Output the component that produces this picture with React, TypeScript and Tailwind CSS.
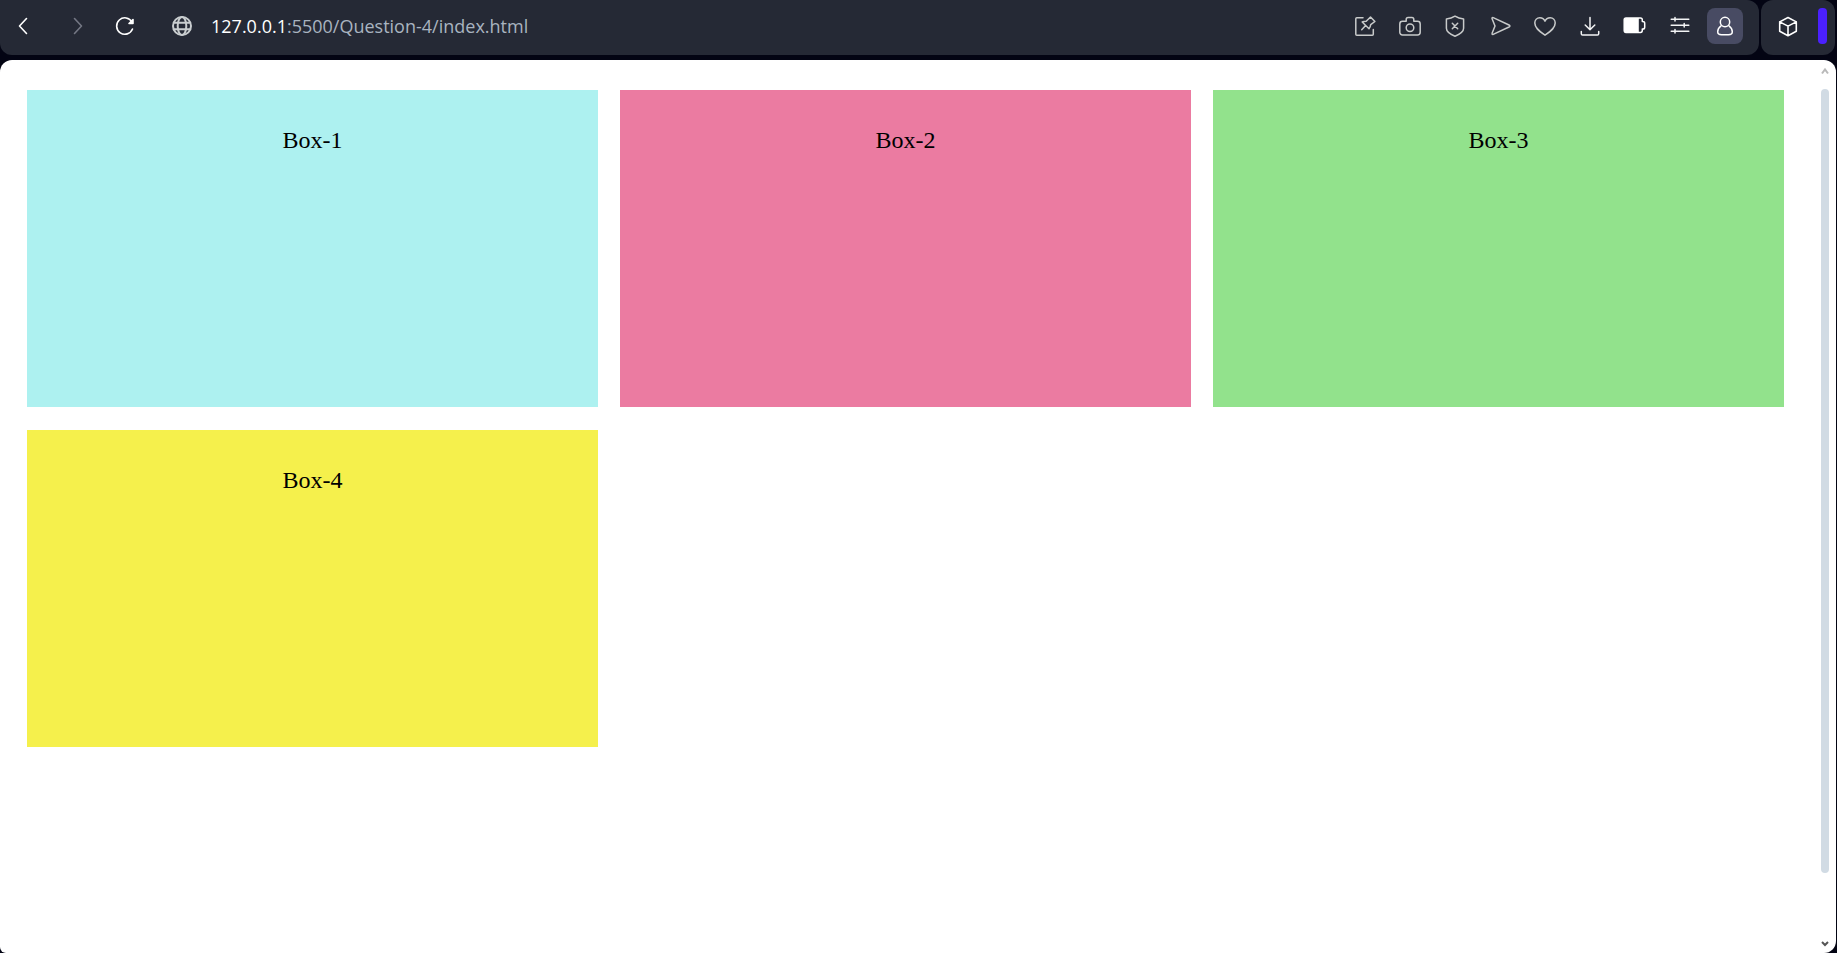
import type { ReactNode } from "react";

type IconProps = { children: ReactNode; size?: string; stroke?: string };

function Icon({ children, size = "size-6", stroke = "1.5" }: IconProps) {
  return (
    <svg
      viewBox="0 0 24 24"
      className={size}
      fill="none"
      stroke="currentColor"
      strokeWidth={stroke}
      strokeLinecap="round"
      strokeLinejoin="round"
      aria-hidden="true"
    >
      {children}
    </svg>
  );
}

type ToolProps = { label: string; className?: string; children: ReactNode };

function Tool({ label, className = "text-[#c8caca]", children }: ToolProps) {
  return (
    <button
      type="button"
      aria-label={label}
      className={`flex size-9 shrink-0 items-center justify-center rounded-lg ${className}`}
    >
      {children}
    </button>
  );
}

function Toolbar() {
  return (
    <header className="flex gap-0.5 pr-0.5">
      <div className="flex h-[55px] min-w-0 flex-1 items-start rounded-b-xl rounded-tr-xl bg-[#252935] pt-2 pr-4 pl-[5px]">
        <nav aria-label="History" className="flex items-center">
          <Tool label="Back" className="text-white">
            <Icon stroke="1.6">
              <path d="M15.500 4.500 8.500 12l7 7.500" />
            </Icon>
          </Tool>
          <Tool label="Forward" className="ml-[19px] text-[#747784]">
            <Icon stroke="1.6">
              <path d="M8.500 4.500 15.500 12l-7 7.500" />
            </Icon>
          </Tool>
          <Tool label="Reload" className="ml-[11px] text-white">
            <Icon stroke="1.6">
              <path d="M19 8A8.200 8.200 0 1 0 19.500 15" />
              <path d="M20 5.500v4h-4z" fill="currentColor" />
            </Icon>
          </Tool>
        </nav>
        <Tool label="Site information" className="ml-[21px] text-[#c9cdcf]">
          <Icon stroke="2">
            <circle cx="12" cy="12" r="9" />
            <ellipse cx="12" cy="12" rx="4.300" ry="9" />
            <path d="M3.800 8.800h16.400M3.800 15.200h16.400" />
          </Icon>
        </Tool>
        <div
          role="textbox"
          aria-label="Address"
          className="ml-[11px] min-w-0 flex-1 truncate font-['Open_Sans','Noto_Sans',sans-serif] text-lg leading-9 text-[#a9b4c0]"
        >
          <span className="font-medium text-white">127.0.0.1</span>:5500/Question-4/index.html
        </div>
        <div className="flex gap-[9px]">
          <Tool label="Pinboard">
            <Icon>
              <path d="M10 3.700H3.800c-.6 0-1 .4-1 1v15.500c0 .6.400 1 1 1h15.500c.6 0 1-.4 1-1V15.500" />
              <path d="m17.500 3 4.400 4.500-4.200 3.200c-.2 1.500-.7 2.900-1.700 4L9.200 8c1.200-.6 2.600-.8 4-.8zM12.400 11.800l-3.700 3.900" />
            </Icon>
          </Tool>
          <Tool label="Snapshot">
            <Icon>
              <path d="M8.200 7.200V5.500c0-1.100.8-1.900 1.900-1.900h3.800c1.100 0 1.900.8 1.900 1.900v1.700h3.700c1.600 0 2.700 1.100 2.700 2.700v8.300c0 1.600-1.100 2.700-2.700 2.700h-15c-1.600 0-2.700-1.100-2.700-2.700V9.900c0-1.600 1.100-2.700 2.700-2.700z" />
              <circle cx="12" cy="13.700" r="3.800" />
            </Icon>
          </Tool>
          <Tool label="Ad blocker">
            <Icon>
              <path d="M12 2.200c2.600 1.700 5.300 2.500 8.600 2.700v9.300c0 3.900-3.700 6-8.600 8-4.900-2-8.600-4.100-8.600-8V4.900C6.700 4.700 9.400 3.900 12 2.200z" />
              <path d="m9.300 9.300 5.400 5.400M14.700 9.300l-5.400 5.400" />
            </Icon>
          </Tool>
          <Tool label="My Flow">
            <Icon>
              <path d="M5.200 3.600 21 11c1.200.6 1.200 1.400 0 2L5.200 20.400c-.9.400-1.500-.2-1.100-1.100L7 12 4.100 4.700c-.4-.9.200-1.500 1.100-1.100z" />
            </Icon>
          </Tool>
          <Tool label="Bookmark">
            <Icon>
              <path d="M12 21.200C5.500 16.800 1.800 13.600 1.800 9c0-3 2.200-5.300 5-5.300 2.200 0 4.300 1.200 5.200 3.400.9-2.200 3-3.400 5.200-3.400 2.800 0 5 2.300 5 5.300 0 4.600-3.700 7.800-10.200 12.200z" />
            </Icon>
          </Tool>
          <Tool label="Downloads" className="text-[#f3f4f5]">
            <Icon>
              <path d="M12 3.500v12.200M7.200 11l4.800 4.800 4.800-4.800M3.300 17.500v2.200c0 .8.500 1.300 1.300 1.300h14.800c.8 0 1.300-.5 1.300-1.300v-2.200" />
            </Icon>
          </Tool>
          <Tool label="Battery saver" className="text-white">
            <Icon>
              <path
                d="M3.200 4h12.600v14.400H3.200c-1.200 0-2-.8-2-2V6c0-1.200.8-2 2-2z"
                fill="currentColor"
                stroke="none"
              />
              <path d="M3 4h14.500c1 0 1.800.8 1.800 1.800v1.700h.6c1.100 0 1.800.7 1.800 1.800v3.900c0 1.100-.7 1.800-1.800 1.800h-.6v1.600c0 1-.8 1.800-1.800 1.800H3c-1 0-1.800-.8-1.800-1.800V5.800C1.200 4.800 2 4 3 4z" />
            </Icon>
          </Tool>
          <Tool label="Easy setup" className="text-[#f3f4f5]">
            <Icon>
              <path d="M3.200 5.200h17.600M3.200 11.200h17.600M3.200 17.200h17.600M7 3.500v3.400M16.200 9.500v3.400M7 15.500v3.400" />
            </Icon>
          </Tool>
          <Tool label="Profile" className="bg-[#484b63] text-white">
            <Icon>
              <circle cx="12" cy="8" r="4.700" />
              <path d="M8 11.800c-2.200 1.600-3.300 3.800-3.300 5.900 0 2.400 1.500 3 3.800 3h7c2.300 0 3.800-.6 3.800-3 0-2.100-1.100-4.300-3.300-5.900" />
            </Icon>
          </Tool>
        </div>
      </div>
      <div className="flex h-[55px] items-start gap-3 rounded-xl bg-[#252935] pt-2 pr-2 pl-[9px]">
        <Tool label="Extensions" className="text-white">
          <Icon stroke="1.600">
            <path d="m12 3.500 8.300 4.400v9.400L12 21.700l-8.300-4.400V7.900zM3.700 7.900l8.300 4.200 8.300-4.200M12 12.100v9.600" />
          </Icon>
        </Tool>
        <button type="button" aria-label="Open side panel" className="h-9 w-[9px] rounded bg-[#4b20ff]" />
      </div>
    </header>
  );
}

const boxes = [
  { name: "Box-1", colour: "bg-[#adf1f0]" },
  { name: "Box-2", colour: "bg-[#eb7ba1]" },
  { name: "Box-3", colour: "bg-[#92e28c]" },
  { name: "Box-4", colour: "bg-[#f5f04c]" },
];

function ScrollTrack() {
  return (
    <div className="flex shrink-0 flex-col items-center pt-[7px] pr-[7px] pb-[5px]" aria-hidden="true">
      <svg viewBox="0 0 8 8" className="size-2 text-[#b9b9b9]" fill="none" stroke="currentColor" strokeWidth="2">
        <path d="M1 6.500 4 2.500l3 4" />
      </svg>
      <div className="mt-3.5 mb-[67px] w-2 flex-1 rounded-full bg-[#d1dbe4]" />
      <svg viewBox="0 0 8 8" className="size-2 text-[#555555]" fill="none" stroke="currentColor" strokeWidth="2">
        <path d="M1 2 4 5l3-3" />
      </svg>
    </div>
  );
}

export default function App() {
  return (
    <div className="flex min-h-screen flex-col gap-[5px] bg-[#030413]">
      <Toolbar />
      <div className="mr-px flex flex-1 rounded-t-xl rounded-br-xl rounded-bl-md bg-white">
        <main className="grid flex-1 grid-cols-3 content-start gap-x-[22px] gap-y-[23px] pt-[30px] pr-[37px] pl-[27px]">
          {boxes.map((box) => (
            <section
              key={box.name}
              className={`h-[317px] pt-[34px] text-center font-['Liberation_Serif',serif] text-2xl leading-8 text-black ${box.colour}`}
            >
              {box.name}
            </section>
          ))}
        </main>
        <ScrollTrack />
      </div>
    </div>
  );
}
